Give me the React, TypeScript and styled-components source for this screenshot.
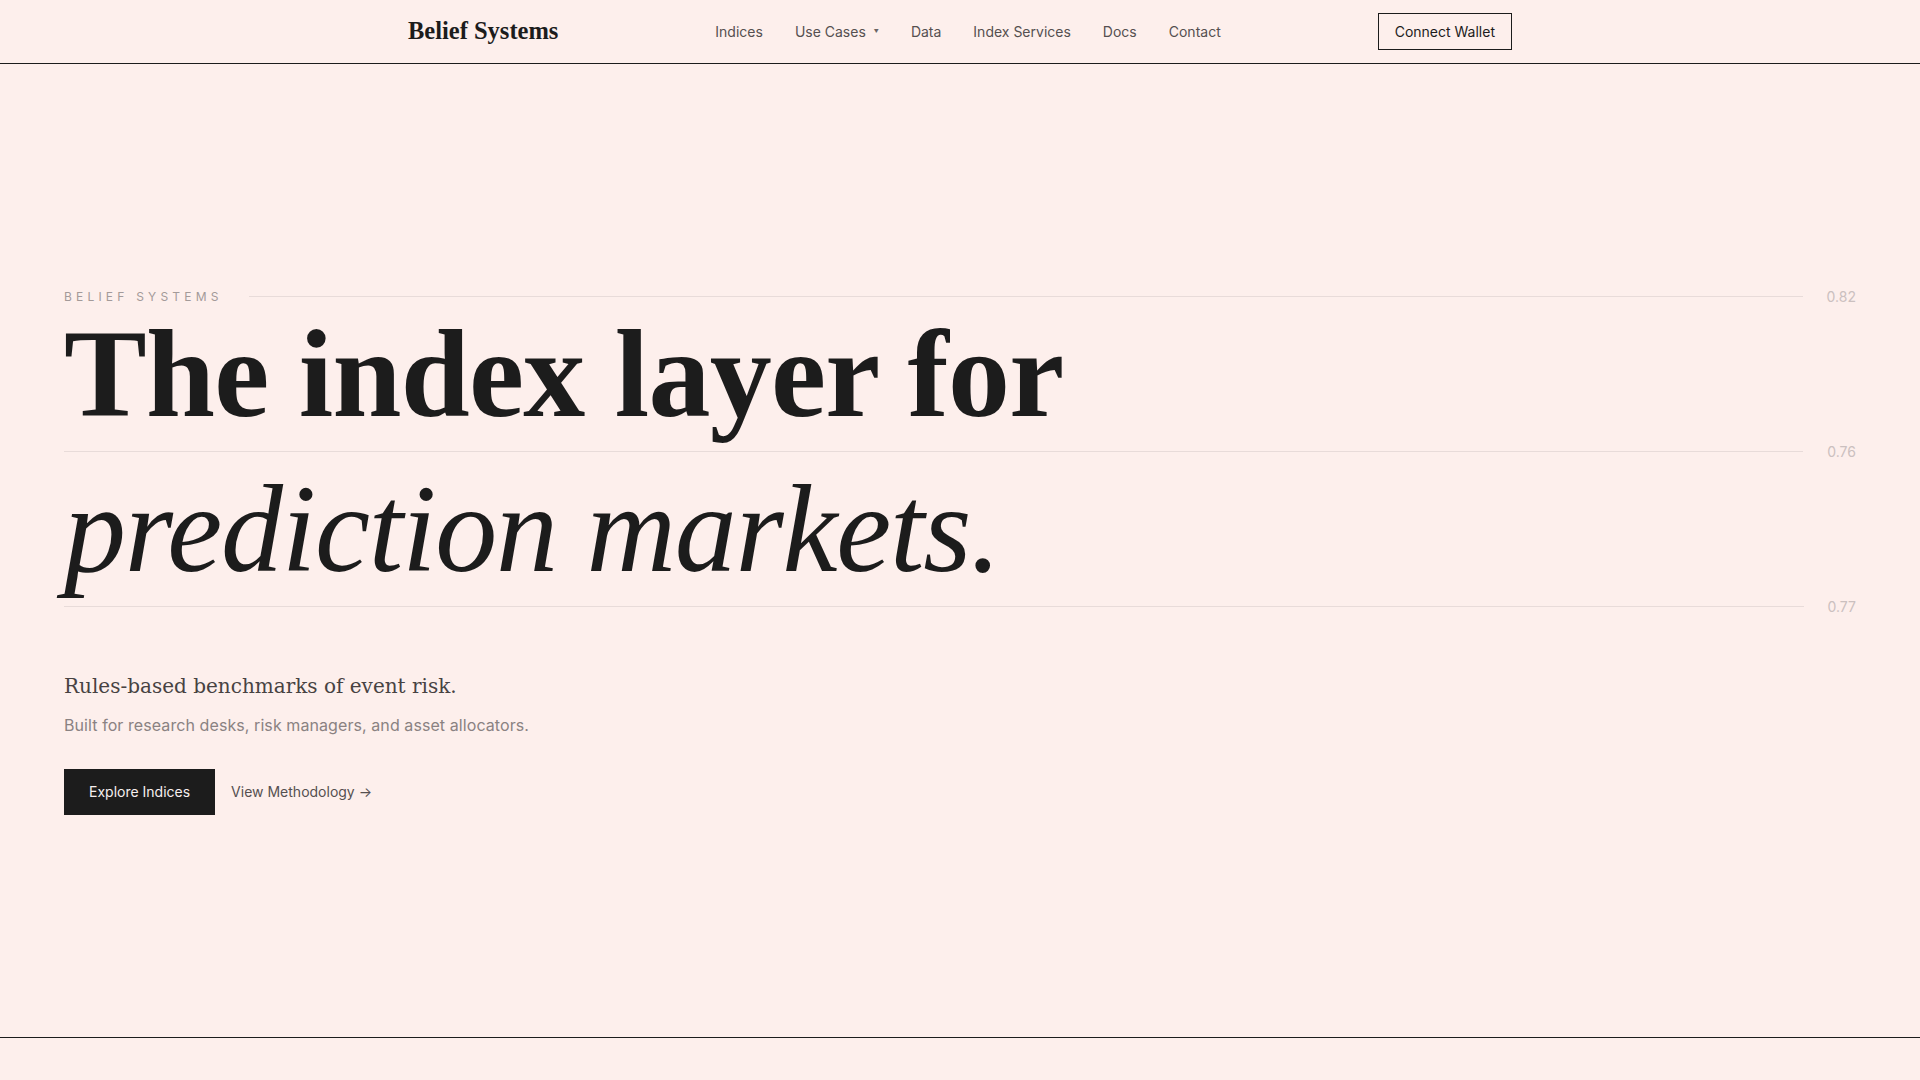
import React from "react";
import styled, { createGlobalStyle } from "styled-components";

const GlobalStyle = createGlobalStyle`
  *, *::before, *::after { box-sizing: border-box; }
  html, body { margin: 0; padding: 0; }
  body {
    background: #fdefec;
    color: #1c1c1c;
    font-family: Inter, "Liberation Sans", sans-serif;
    -webkit-font-smoothing: antialiased;
  }
`;

const Page = styled.div`
  min-height: 100vh;
  display: flex;
  flex-direction: column;
`;

const NavBar = styled.header`
  height: 64px;
  border-bottom: 1px solid #1c1c1c;
`;

const NavInner = styled.div`
  max-width: 1152px;
  height: 100%;
  margin: 0 auto;
  padding: 0 24px;
  display: flex;
  align-items: center;
  justify-content: space-between;
`;

const Logo = styled.a`
  font-family: "Liberation Serif", "DejaVu Serif", serif;
  font-weight: 700;
  font-size: 24.5px;
  line-height: 1;
  color: #1c1c1c;
  text-decoration: none;
`;

const NavLinks = styled.nav`
  display: flex;
  align-items: center;
  gap: 32px;
`;

const NavLink = styled.a`
  display: inline-flex;
  align-items: center;
  gap: 8px;
  font-size: 14px;
  line-height: 20px;
  color: #555050;
  text-decoration: none;
`;

const Caret = styled.span`
  font-size: 5px;
  line-height: 1;
  color: #6a6464;
`;

const WalletButton = styled.button`
  font-family: Inter, "Liberation Sans", sans-serif;
  font-size: 14px;
  line-height: 19px;
  padding: 8px 16px;
  color: #1c1c1c;
  background: transparent;
  border: 1px solid #1c1c1c;
  border-radius: 0;
  cursor: pointer;
`;

const Hero = styled.section`
  height: 974px;
  border-bottom: 1px solid #1c1c1c;
  padding: 0 64px;
  display: flex;
  flex-direction: column;
  justify-content: center;
`;

const RuleRow = styled.div`
  height: 20px;
  display: flex;
  align-items: center;
`;

const Eyebrow = styled.span`
  font-size: 12px;
  line-height: 20px;
  letter-spacing: 0.35em;
  text-transform: uppercase;
  color: #a39a99;
  margin-right: 26px;
`;

const RuleLine = styled.div`
  flex: 1;
  height: 1px;
  background: #e8dbd9;
`;

const RuleValue = styled.span`
  margin-left: 24px;
  font-size: 14px;
  line-height: 20px;
  color: #cbc0bf;
`;

const Headline = styled.h1`
  margin: 0;
  font-weight: 400;
`;

const HeadlineLine = styled.span<{ $italic?: boolean }>`
  display: block;
  font-family: "Liberation Serif", "DejaVu Serif", serif;
  font-size: 124px;
  line-height: 135px;
  color: #1c1c1c;
  font-weight: ${(p) => (p.$italic ? 400 : 700)};
  font-style: ${(p) => (p.$italic ? "italic" : "normal")};
  letter-spacing: ${(p) => (p.$italic ? "-0.01em" : "-0.006em")};
  white-space: nowrap;
`;

const Lede = styled.p`
  margin: 55px 0 0;
  font-family: "DejaVu Serif", "Liberation Serif", serif;
  font-size: 20px;
  line-height: 28px;
  color: #474242;
`;

const Audience = styled.p`
  margin: 13px 0 0;
  font-size: 16px;
  line-height: 24px;
  letter-spacing: 0.005em;
  color: #8a8282;
`;

const Actions = styled.div`
  margin-top: 32px;
  display: flex;
  align-items: center;
  gap: 16px;
`;

const PrimaryButton = styled.a`
  display: inline-block;
  padding: 12px 25px;
  font-size: 14px;
  line-height: 22px;
  color: #f6efee;
  background: #1c1c1c;
  text-decoration: none;
`;

const TextLink = styled.a`
  font-size: 14px;
  line-height: 22px;
  color: #555050;
  text-decoration: none;
`;

const Below = styled.div`
  flex: 1;
`;

const navItems = ["Indices", "Use Cases", "Data", "Index Services", "Docs", "Contact"];

export default function App() {
  return (
    <>
      <GlobalStyle />
      <Page>
        <NavBar>
          <NavInner>
            <Logo href="#">Belief Systems</Logo>
            <NavLinks>
              {navItems.map((item) => (
                <NavLink key={item} href="#">
                  {item}
                  {item === "Use Cases" && <Caret>▼</Caret>}
                </NavLink>
              ))}
            </NavLinks>
            <WalletButton type="button">Connect Wallet</WalletButton>
          </NavInner>
        </NavBar>

        <Hero>
          <RuleRow>
            <Eyebrow>Belief Systems</Eyebrow>
            <RuleLine />
            <RuleValue>0.82</RuleValue>
          </RuleRow>
          <Headline>
            <HeadlineLine>The index layer for</HeadlineLine>
            <RuleRow>
              <RuleLine />
              <RuleValue>0.76</RuleValue>
            </RuleRow>
            <HeadlineLine $italic>prediction markets.</HeadlineLine>
          </Headline>
          <RuleRow>
            <RuleLine />
            <RuleValue>0.77</RuleValue>
          </RuleRow>
          <Lede>Rules-based benchmarks of event risk.</Lede>
          <Audience>Built for research desks, risk managers, and asset allocators.</Audience>
          <Actions>
            <PrimaryButton href="#">Explore Indices</PrimaryButton>
            <TextLink href="#">View Methodology →</TextLink>
          </Actions>
        </Hero>
        <Below />
      </Page>
    </>
  );
}
